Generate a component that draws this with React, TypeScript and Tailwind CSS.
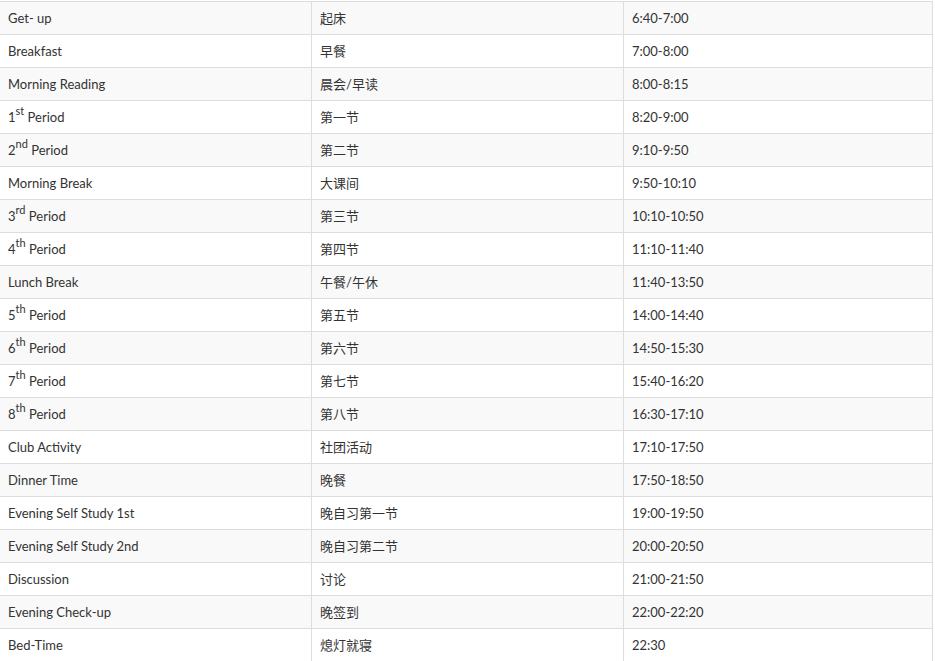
import React from 'react';

type RowType = {
  num?: string;
  sup?: string;
  en: string;
  zh: string;
  time: string;
};

const rows: RowType[] = [
  { en: 'Get- up', zh: '起床', time: '6:40-7:00' },
  { en: 'Breakfast', zh: '早餐', time: '7:00-8:00' },
  { en: 'Morning Reading', zh: '晨会/早读', time: '8:00-8:15' },
  { num: '1', sup: 'st', en: ' Period', zh: '第一节', time: '8:20-9:00' },
  { num: '2', sup: 'nd', en: ' Period', zh: '第二节', time: '9:10-9:50' },
  { en: 'Morning Break', zh: '大课间', time: '9:50-10:10' },
  { num: '3', sup: 'rd', en: ' Period', zh: '第三节', time: '10:10-10:50' },
  { num: '4', sup: 'th', en: ' Period', zh: '第四节', time: '11:10-11:40' },
  { en: 'Lunch Break', zh: '午餐/午休', time: '11:40-13:50' },
  { num: '5', sup: 'th', en: ' Period', zh: '第五节', time: '14:00-14:40' },
  { num: '6', sup: 'th', en: ' Period', zh: '第六节', time: '14:50-15:30' },
  { num: '7', sup: 'th', en: ' Period', zh: '第七节', time: '15:40-16:20' },
  { num: '8', sup: 'th', en: ' Period', zh: '第八节', time: '16:30-17:10' },
  { en: 'Club Activity', zh: '社团活动', time: '17:10-17:50' },
  { en: 'Dinner Time', zh: '晚餐', time: '17:50-18:50' },
  { en: 'Evening Self Study 1st', zh: '晚自习第一节', time: '19:00-19:50' },
  { en: 'Evening Self Study 2nd', zh: '晚自习第二节', time: '20:00-20:50' },
  { en: 'Discussion', zh: '讨论', time: '21:00-21:50' },
  { en: 'Evening Check-up', zh: '晚签到', time: '22:00-22:20' },
  { en: 'Bed-Time', zh: '熄灯就寝', time: '22:30' },
];

function App() {
  return (
    <div className="w-[935px] h-[661px] overflow-hidden bg-white pt-px">
      <table className="w-[934px] -ml-px border-collapse table-fixed text-[13px] text-[#333] font-['Lato','Noto_Sans_CJK_SC',sans-serif]">
        <tbody>
          {rows.map((r, i) => (
            <tr key={i} className={i % 2 === 0 ? 'bg-[#f9f9f9]' : 'bg-white'}>
              <td className="w-[312px] h-[33px] border border-[#ddd] px-2 py-0 leading-[20px] align-middle">
                {r.num ? (
                  <>
                    {r.num}
                    <sup className="text-[11px] leading-none relative -top-[2px] align-super">{r.sup}</sup>
                    {r.en}
                  </>
                ) : (
                  r.en
                )}
              </td>
              <td className="w-[312px] h-[33px] border border-[#ddd] px-2 py-0 leading-[20px] align-middle">{r.zh}</td>
              <td className="h-[33px] border border-[#ddd] px-2 py-0 leading-[20px] align-middle">{r.time}</td>
            </tr>
          ))}
        </tbody>
      </table>
    </div>
  );
}

export default App;
